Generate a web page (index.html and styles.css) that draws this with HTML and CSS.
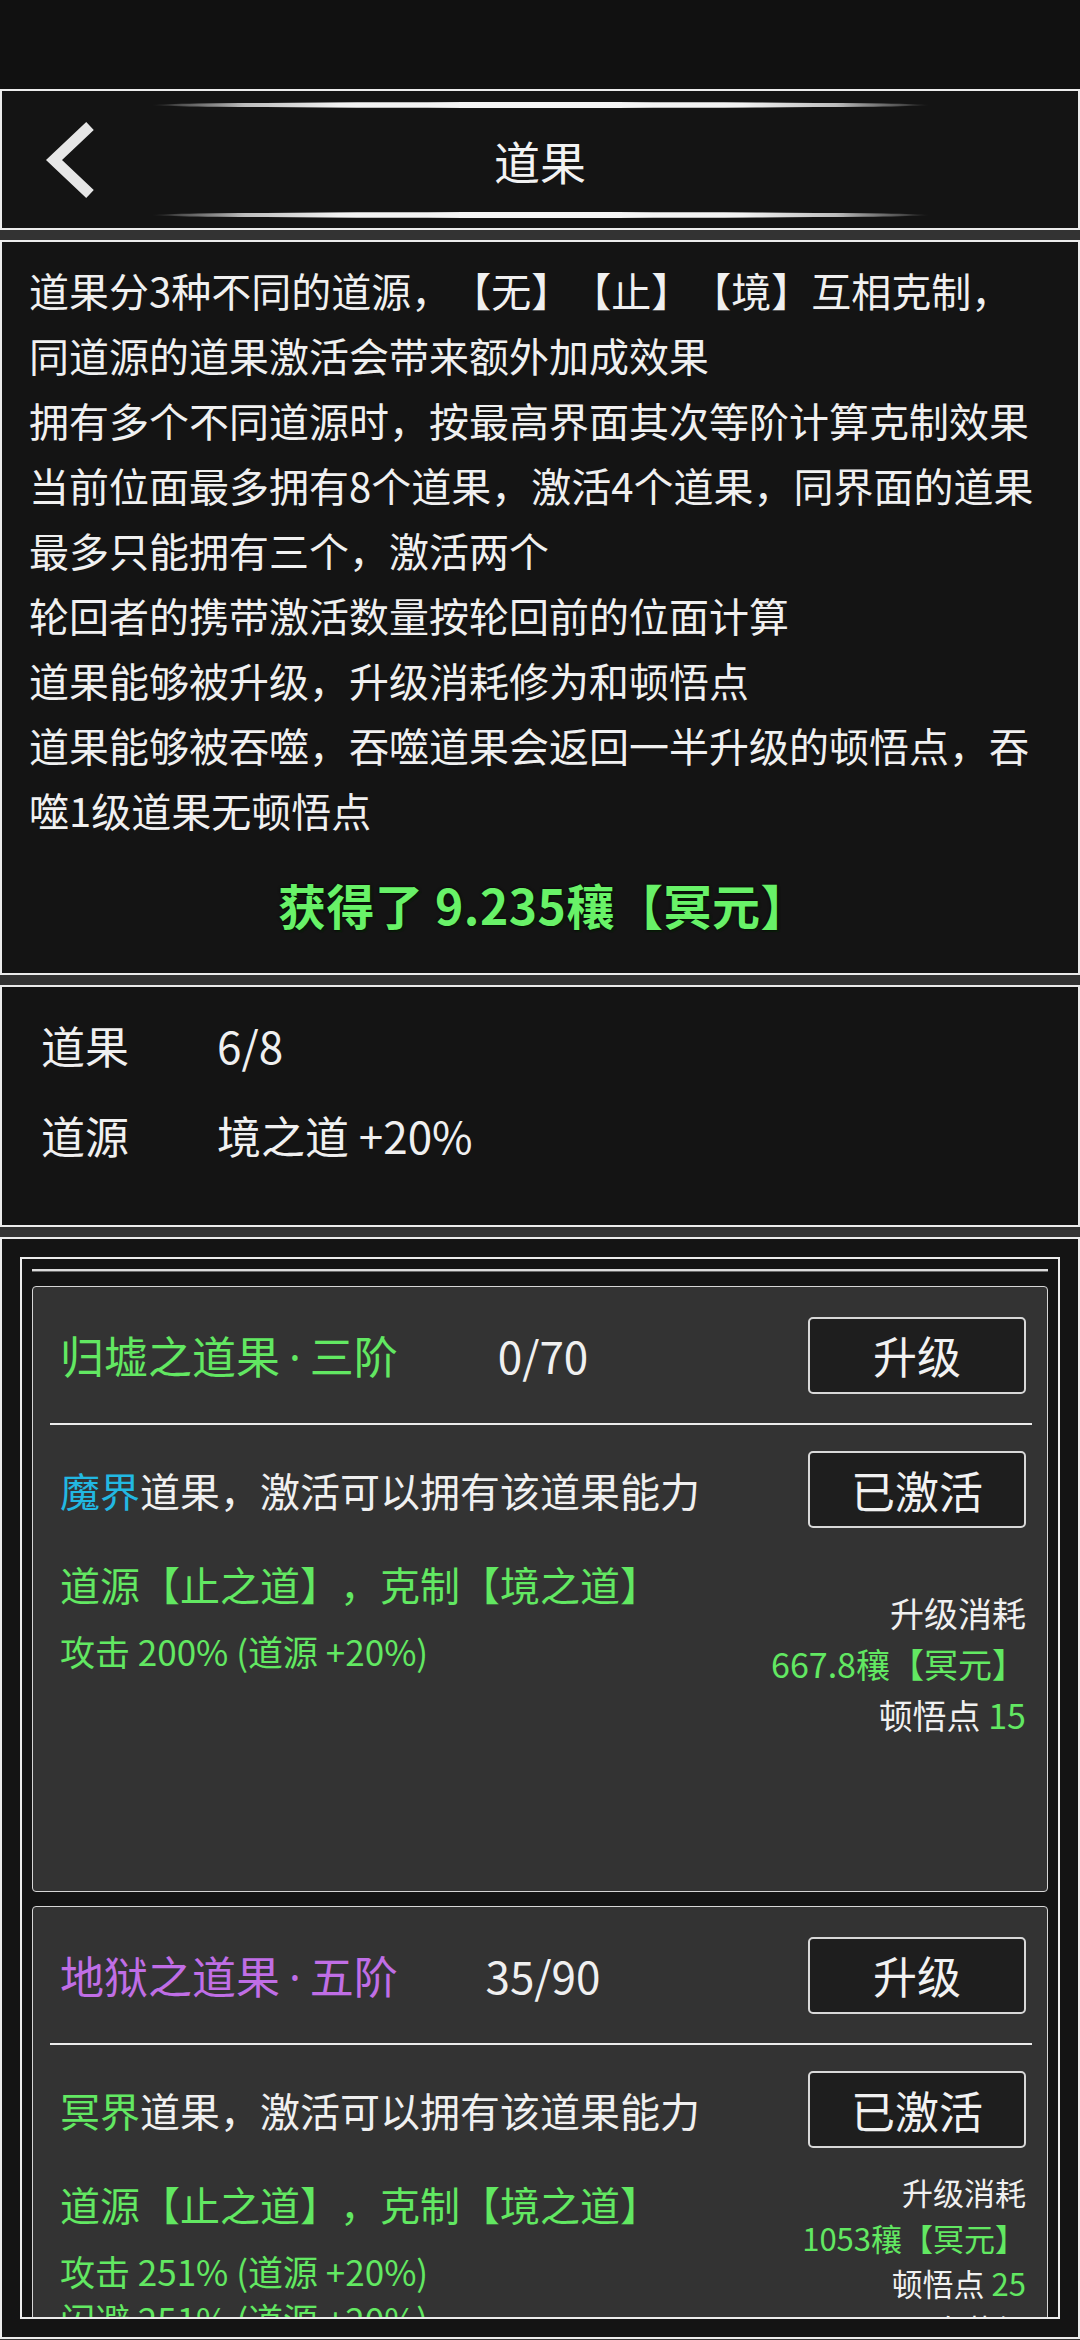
FILE: index.html
```html
<!DOCTYPE html>
<html lang="zh-CN">
<head>
    <meta charset="UTF-8">
    <meta name="viewport" content="width=device-width, initial-scale=1.0">
    <title>道果</title>
    <link rel="stylesheet" href="styles.css">
</head>
<body>
    <div class="topbar"></div>

    <!-- Header -->
    <div class="panel header">
        <div class="glow-line"></div>
        <div class="header-row">
            <div class="back">
                <svg width="60" height="84" viewBox="0 0 60 84">
                    <polyline points="50,8 14,42 50,76" fill="none" stroke="#e6e6e6" stroke-width="11" stroke-linejoin="miter"/>
                </svg>
            </div>
            <h1>道果</h1>
            <div></div>
        </div>
        <div class="glow-line"></div>
    </div>

    <!-- Rules -->
    <div class="panel info">
        <p>道果分3种不同的道源，【无】【止】【境】互相克制，<br>同道源的道果激活会带来额外加成效果</p>
        <p>拥有多个不同道源时，按最高界面其次等阶计算克制效果</p>
        <p>当前位面最多拥有8个道果，激活4个道果，同界面的道果<br>最多只能拥有三个，激活两个</p>
        <p>轮回者的携带激活数量按轮回前的位面计算</p>
        <p>道果能够被升级，升级消耗修为和顿悟点</p>
        <p>道果能够被吞噬，吞噬道果会返回一半升级的顿悟点，吞<br>噬1级道果无顿悟点</p>
        <div class="gain">获得了 9.235穰【冥元】</div>
    </div>

    <!-- Summary -->
    <div class="panel stats">
        <div class="stat-row"><span class="stat-label">道果</span><span>6/8</span></div>
        <div class="stat-row"><span class="stat-label">道源</span><span>境之道 +20%</span></div>
    </div>

    <!-- List -->
    <div class="panel list">
        <div class="list-box">
            <div class="list-rail"></div>

            <div class="card">
                <div class="card-head">
                    <div class="card-title green">归墟之道果<span class="dot">·</span>三阶</div>
                    <div class="card-count">0/70</div>
                    <button class="btn">升级</button>
                </div>
                <div class="card-line"></div>
                <div class="card-body">
                    <div class="card-row">
                        <div class="card-desc"><span class="cyan">魔界</span>道果，激活可以拥有该道果能力</div>
                        <button class="btn">已激活</button>
                    </div>
                    <div class="card-detail">
                        <div class="effects">
                            <div class="src green">道源【止之道】，克制【境之道】</div>
                            <div class="effect green">攻击 200% (道源 +20%)</div>
                        </div>
                        <div class="cost">
                            <div>升级消耗</div>
                            <div class="green">667.8穰【冥元】</div>
                            <div>顿悟点 <span class="green">15</span></div>
                        </div>
                    </div>
                </div>
            </div>

            <div class="card">
                <div class="card-head">
                    <div class="card-title purple">地狱之道果<span class="dot">·</span>五阶</div>
                    <div class="card-count">35/90</div>
                    <button class="btn">升级</button>
                </div>
                <div class="card-line"></div>
                <div class="card-body">
                    <div class="card-row">
                        <div class="card-desc"><span class="green">冥界</span>道果，激活可以拥有该道果能力</div>
                        <button class="btn">已激活</button>
                    </div>
                    <div class="card-detail">
                        <div class="effects">
                            <div class="src green">道源【止之道】，克制【境之道】</div>
                            <div class="effect green">攻击 251% (道源 +20%)</div>
                            <div class="effect green">闪避 251% (道源 +20%)</div>
                        </div>
                        <div class="cost cost-sm">
                            <div>升级消耗</div>
                            <div class="green">1053穰【冥元】</div>
                            <div>顿悟点 <span class="green">25</span></div>
                            <div>再次获得</div>
                        </div>
                    </div>
                </div>
            </div>
        </div>
    </div>
</body>
</html>
```

FILE: styles.css
```css
:root {
    --panel-bg: #141414;
    --gap-bg: #333333;
    --card-bg: #333333;
    --text: #f0f0f0;
    --line: #ececec;
    --green: #62e862;
    --cyan: #22b8e2;
    --purple: #c06ee6;
}

* {
    margin: 0;
    padding: 0;
    box-sizing: border-box;
}

body {
    width: 1080px;
    background-color: var(--gap-bg);
    color: var(--text);
    font-family: "Noto Sans CJK SC", "Noto Sans", sans-serif;
    text-spacing-trim: space-all;
}

.topbar {
    height: 89px;
    background-color: #111111;
}

.panel {
    background-color: var(--panel-bg);
    border: 2px solid var(--line);
    margin-bottom: 10px;
}

/* header */
.header {
    padding: 11px 0 10px;
}

.glow-line {
    width: 777px;
    height: 6px;
    margin: 0 auto;
    border-radius: 50%;
    background: linear-gradient(to right, rgba(90, 90, 90, 0) 0%, #555 4%, #bdbdbd 12%, #f2f2f2 24%, #f6f6f6 50%, #f2f2f2 76%, #bdbdbd 88%, #555 96%, rgba(90, 90, 90, 0) 100%);
}

.header-row {
    height: 104px;
    display: grid;
    grid-template-columns: 1fr auto 1fr;
    align-items: center;
}

.back {
    padding-left: 38px;
    display: flex;
    align-items: center;
}

.back svg {
    display: block;
}

h1 {
    font-size: 46px;
    font-weight: 400;
    color: #f2f2f2;
    line-height: 1;
}

/* rules */
.info {
    padding: 16px 20px 34px 27px;
    font-size: 40px;
    line-height: 65px;
}

.gain {
    margin-top: 26px;
    line-height: 70px;
    text-align: center;
    font-size: 48px;
    font-weight: 700;
    letter-spacing: 0.5px;
    color: #68f268;
    text-shadow: 0 0 3px #000, 2px 2px 1px #0b1f0b;
}

/* summary */
.stats {
    padding: 13px 0 45px 39px;
    font-size: 44px;
}

.stat-row {
    display: flex;
    line-height: 90px;
}

.stat-label {
    width: 176px;
}

/* list */
.list {
    padding: 18px;
}

.list-box {
    height: 1062px;
    border: 2px solid var(--line);
    padding: 10px;
    overflow: hidden;
}

.list-rail {
    height: 3px;
    background-color: #dcdcdc;
    border-bottom: 1px solid #6a6a6a;
    margin-bottom: 14px;
}

.card {
    height: 606px;
    background-color: var(--card-bg);
    border: 1px solid #d6d6d6;
    border-radius: 4px;
    margin-bottom: 14px;
}

.card-head {
    height: 136px;
    display: grid;
    grid-template-columns: 1fr auto 1fr;
    align-items: center;
    padding: 0 21px 0 27px;
}

.card-title {
    font-size: 44px;
    white-space: nowrap;
}

.dot {
    font-family: "Noto Sans", sans-serif;
    margin: 0 9px;
}

.card-count {
    font-size: 44px;
    color: var(--text);
}

.btn {
    justify-self: end;
    width: 218px;
    height: 77px;
    background-color: #1e1e1e;
    border: 2px solid #d8d8d8;
    border-radius: 5px;
    color: #f2f2f2;
    font-family: inherit;
    font-size: 44px;
    line-height: 1;
}

.card-line {
    height: 2px;
    background-color: var(--line);
    margin: 0 15px 0 17px;
}

.card-body {
    padding: 26px 21px 0 27px;
}

.card-row {
    display: flex;
    justify-content: space-between;
    align-items: center;
    height: 77px;
}

.card-desc {
    font-size: 40px;
}

.card-detail {
    display: flex;
    justify-content: space-between;
    align-items: flex-start;
    margin-top: 26px;
}

.src {
    font-size: 40px;
    line-height: 60px;
}

.effect {
    font-size: 35px;
    line-height: 48px;
}

.src + .effect {
    margin-top: 13px;
}

.cost {
    text-align: right;
    font-size: 34px;
    line-height: 51px;
    margin-top: 33px;
}

.cost-sm {
    font-size: 31px;
    line-height: 45.5px;
    margin-top: -5px;
}

.green {
    color: var(--green);
}

.cyan {
    color: var(--cyan);
}

.purple {
    color: var(--purple);
}
```
